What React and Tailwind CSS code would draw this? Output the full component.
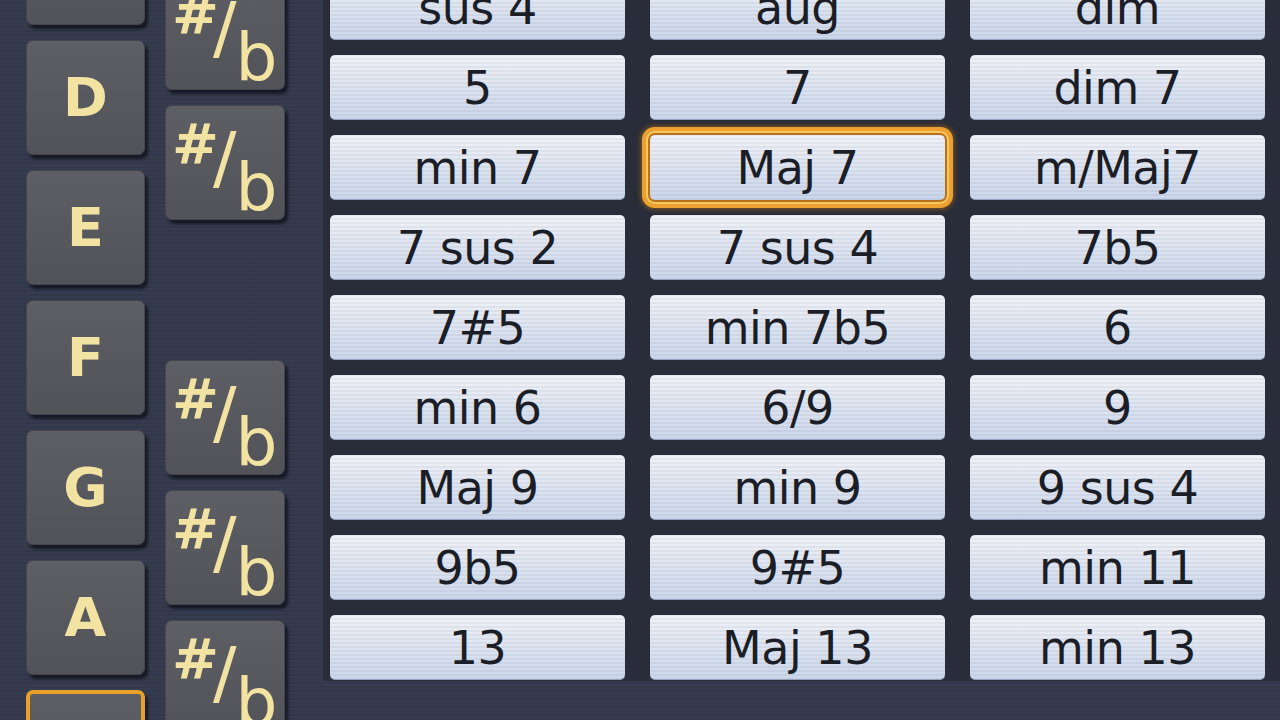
import React from 'react';

const naturals = ['C', 'D', 'E', 'F', 'G', 'A', 'B'];

const chords = [
  ['sus 4', 'aug', 'dim'],
  ['5', '7', 'dim 7'],
  ['min 7', 'Maj 7', 'm/Maj7'],
  ['7 sus 2', '7 sus 4', '7b5'],
  ['7#5', 'min 7b5', '6'],
  ['min 6', '6/9', '9'],
  ['Maj 9', 'min 9', '9 sus 4'],
  ['9b5', '9#5', 'min 11'],
  ['13', 'Maj 13', 'min 13'],
];

const keyBase =
  'rounded-[7px] bg-[linear-gradient(#5d5f65,#515358)] shadow-[3px_4px_3px_rgba(10,12,20,0.7)] border border-[#45474d]';

const NoteKey = ({ note, active }) => (
  <div
    className={`${keyBase} h-[115px] w-[119px] shrink-0 flex items-center justify-center ${
      active ? 'border-4 border-[#e9a12a]' : ''
    }`}
  >
    <span className="text-[54px] font-bold leading-none text-[#f3e3a2] font-['DejaVu_Sans',sans-serif]">
      {note}
    </span>
  </div>
);

const SharpKey = ({ className = '' }) => (
  <div className={`${keyBase} h-[115px] w-[120px] shrink-0 flex items-start pl-[6px] pt-[10px] ${className}`}>
    <div className="flex items-start text-[#f3e3a2] font-['DejaVu_Sans',sans-serif] leading-none">
      <span className="text-[56px] font-bold">#</span>
      <span className="text-[70px] -ml-[6px] mt-[7px]">/</span>
      <span className="text-[66px] -ml-[1px] mt-[39px]">b</span>
    </div>
  </div>
);

const ChordButton = ({ label, selected }) => (
  <div
    className={`h-[65px] rounded-[5px] flex items-center justify-center bg-[repeating-linear-gradient(0deg,rgba(60,80,120,0.07)_0px,rgba(60,80,120,0.07)_2px,transparent_2px,transparent_4px),linear-gradient(#f1f2f6,#cbd6ea)] ${
      selected
        ? 'relative z-10 shadow-[0_0_0_2px_#b8701a,0_0_0_4px_#f6c860,0_0_0_8px_#eba030,0_0_5px_9px_rgba(200,120,20,0.55)]'
        : 'shadow-[inset_0_-1px_0_rgba(120,135,165,0.6)]'
    }`}
  >
    <span className="text-[46px] leading-none text-[#1b1e26] font-['DejaVu_Sans',sans-serif] tracking-[-0.5px]">
      {label}
    </span>
  </div>
);

export default function App() {
  return (
    <div className="w-[1280px] h-[720px] overflow-hidden flex bg-[#363c50] bg-[repeating-linear-gradient(0deg,rgba(0,0,0,0.07)_0px,rgba(0,0,0,0.07)_2px,transparent_2px,transparent_4px)]">
      <div className="ml-[26px] -mt-[90px] flex flex-col gap-[15px]">
        {naturals.map(n => (
          <NoteKey key={n} note={n} active={n === 'B'} />
        ))}
      </div>

      <div className="ml-[20px] -mt-[25px] flex flex-col gap-[15px]">
        <SharpKey />
        <SharpKey />
        <SharpKey className="mt-[125px]" />
        <SharpKey />
        <SharpKey />
      </div>

      <div className="ml-[38px] -mt-[30px] self-start bg-[#292d39] pl-[7px] pr-[15px] pt-[5px] pb-[1px] rounded-bl-[4px]">
        <div className="grid grid-cols-[295px_295px_295px] gap-x-[25px] gap-y-[15px]">
          {chords.flat().map(c => (
            <ChordButton key={c} label={c} selected={c === 'Maj 7'} />
          ))}
        </div>
      </div>
    </div>
  );
}
